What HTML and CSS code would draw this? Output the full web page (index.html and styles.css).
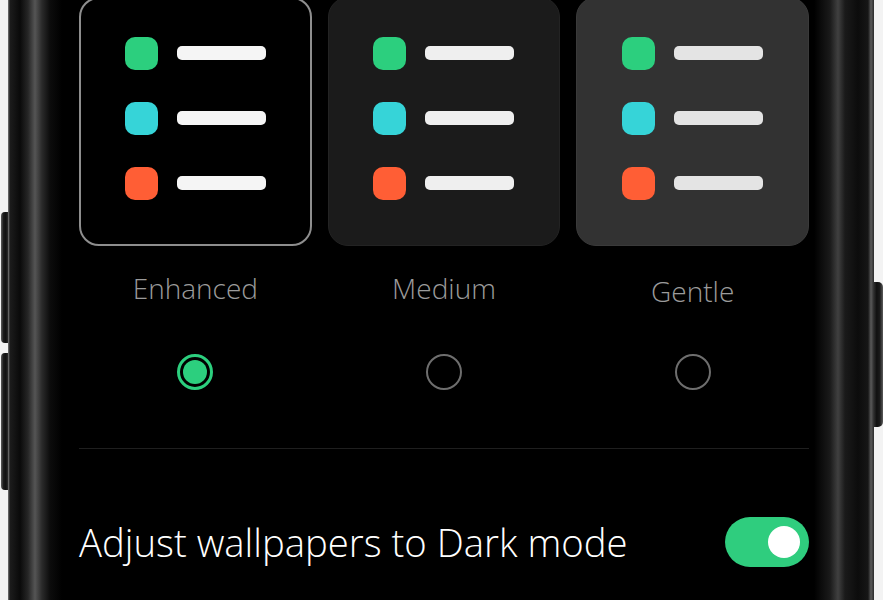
FILE: index.html
```html
<!DOCTYPE html>
<html lang="en">
<head>
    <meta charset="UTF-8">
    <meta name="viewport" content="width=device-width, initial-scale=1.0">
    <title>Dark mode style</title>
    <link rel="stylesheet" href="styles.css">
</head>
<body>
    <div class="rail rail-left">
        <div class="key key-left key-volume-up"></div>
        <div class="key key-left key-volume-down"></div>
    </div>

    <div class="phone">
        <div class="screen">
            <div class="options">
                <div class="option">
                    <div class="preview preview-enhanced">
                        <div class="row"><span class="dot green"></span><span class="bar"></span></div>
                        <div class="row"><span class="dot cyan"></span><span class="bar"></span></div>
                        <div class="row"><span class="dot orange"></span><span class="bar"></span></div>
                    </div>
                    <div class="option-label">Enhanced</div>
                    <div class="radio checked"><span class="radio-dot"></span></div>
                </div>

                <div class="option">
                    <div class="preview preview-medium">
                        <div class="row"><span class="dot green"></span><span class="bar"></span></div>
                        <div class="row"><span class="dot cyan"></span><span class="bar"></span></div>
                        <div class="row"><span class="dot orange"></span><span class="bar"></span></div>
                    </div>
                    <div class="option-label">Medium</div>
                    <div class="radio"></div>
                </div>

                <div class="option">
                    <div class="preview preview-gentle">
                        <div class="row"><span class="dot green"></span><span class="bar"></span></div>
                        <div class="row"><span class="dot cyan"></span><span class="bar"></span></div>
                        <div class="row"><span class="dot orange"></span><span class="bar"></span></div>
                    </div>
                    <div class="option-label option-label-low">Gentle</div>
                    <div class="radio"></div>
                </div>
            </div>

            <div class="divider"></div>

            <div class="setting">
                <div class="setting-title">Adjust wallpapers to Dark mode</div>
                <div class="switch on"><span class="switch-knob"></span></div>
            </div>
        </div>
    </div>

    <div class="rail rail-right">
        <div class="key key-right key-power"></div>
    </div>
</body>
</html>
```

FILE: styles.css
```css
* {
    margin: 0;
    padding: 0;
    box-sizing: border-box;
}

body {
    font-family: 'Open Sans', 'Noto Sans', sans-serif;
    background: #f3f3f3;
    height: 600px;
    overflow: hidden;
    display: flex;
}

/* Side buttons */
.rail {
    display: flex;
    flex-direction: column;
}

.rail-left {
    width: 8px;
    padding-left: 1px;
}

.rail-right {
    width: 9px;
}

.key {
    background: linear-gradient(to right, #5c5c5c 0%, #1b1b1b 35%, #101010 70%, #2c2c2c 100%);
}

.key-left {
    border-radius: 4px 0 0 4px;
}

.key-volume-up {
    height: 131px;
    margin-top: 212px;
}

.key-volume-down {
    height: 137px;
    margin-top: 10px;
}

.key-right {
    border-radius: 0 5px 5px 0;
    background: linear-gradient(to left, #5c5c5c 0%, #1b1b1b 35%, #101010 70%, #2c2c2c 100%);
}

.key-power {
    height: 145px;
    margin-top: 282px;
}

/* Phone body */
.phone {
    flex: 1;
    height: 600px;
    background: linear-gradient(to right,
        #7a7a7a 0px, #1c1c1c 2px, #0a0a0a 12px, #262626 20px, #555555 27px,
        #2a2a2a 34px, #0c0c0c 42px, #000000 54px,
        #000000 806px, #1a1a1a 822px, #404040 830px, #1a1a1a 837px,
        #0c0c0c 850px, #161616 860px, #5a5a5a 863px, #2a2a2a 866px);
}

.screen {
    padding: 0 65px 0 71px;
}

/* Style options */
.options {
    display: grid;
    grid-template-columns: repeat(3, 1fr);
    column-gap: 16px;
    margin-top: -3px;
}

.option {
    display: flex;
    flex-direction: column;
    align-items: center;
}

.preview {
    width: 100%;
    height: 249px;
    border-radius: 20px;
    padding-bottom: 7px;
    display: flex;
    flex-direction: column;
    justify-content: center;
    align-items: center;
    gap: 32px;
}

.preview-enhanced {
    background: #000;
    border: 2px solid #8e8e8e;
}

.preview-enhanced .bar {
    background: #f5f5f5;
}

.preview-medium {
    background: #1b1b1b;
    border: 1px solid #232323;
}

.preview-medium .bar {
    background: #efefef;
}

.preview-gentle {
    background: #323232;
    border: 1px solid #3a3a3a;
}

.preview-gentle .bar {
    background: #e4e4e4;
}

.row {
    display: flex;
    align-items: center;
    gap: 19px;
}

.dot {
    width: 33px;
    height: 33px;
    border-radius: 10px;
}

.green {
    background: #2ccf7e;
}

.cyan {
    background: #36d4d8;
}

.orange {
    background: #ff5e35;
}

.bar {
    width: 89px;
    height: 14px;
    border-radius: 5px;
}

.option-label {
    margin-top: 25px;
    font-size: 28px;
    line-height: 34px;
    font-weight: 300;
    color: #9b9b9b;
}

.option-label-low {
    margin-top: 28px;
    margin-bottom: -3px;
}

.radio {
    margin-top: 49px;
    width: 36px;
    height: 36px;
    border-radius: 50%;
    border: 2.5px solid #6e6e6e;
    display: flex;
    align-items: center;
    justify-content: center;
}

.radio.checked {
    border: 3px solid #2ccf7e;
}

.radio-dot {
    width: 24px;
    height: 24px;
    border-radius: 50%;
    background: #2ccf7e;
}

.divider {
    margin-top: 58px;
    height: 1px;
    background: #1f1f1f;
}

/* Toggle row */
.setting {
    margin-top: 67px;
    display: flex;
    align-items: center;
    justify-content: space-between;
}

.setting-title {
    font-size: 38.3px;
    font-weight: 300;
    color: #ffffff;
}

.switch {
    width: 84px;
    height: 50px;
    border-radius: 25px;
    background: #2fcd7e;
    display: flex;
    align-items: center;
    justify-content: flex-end;
    padding-right: 9px;
}

.switch-knob {
    width: 32px;
    height: 32px;
    border-radius: 50%;
    background: #ffffff;
}
```
